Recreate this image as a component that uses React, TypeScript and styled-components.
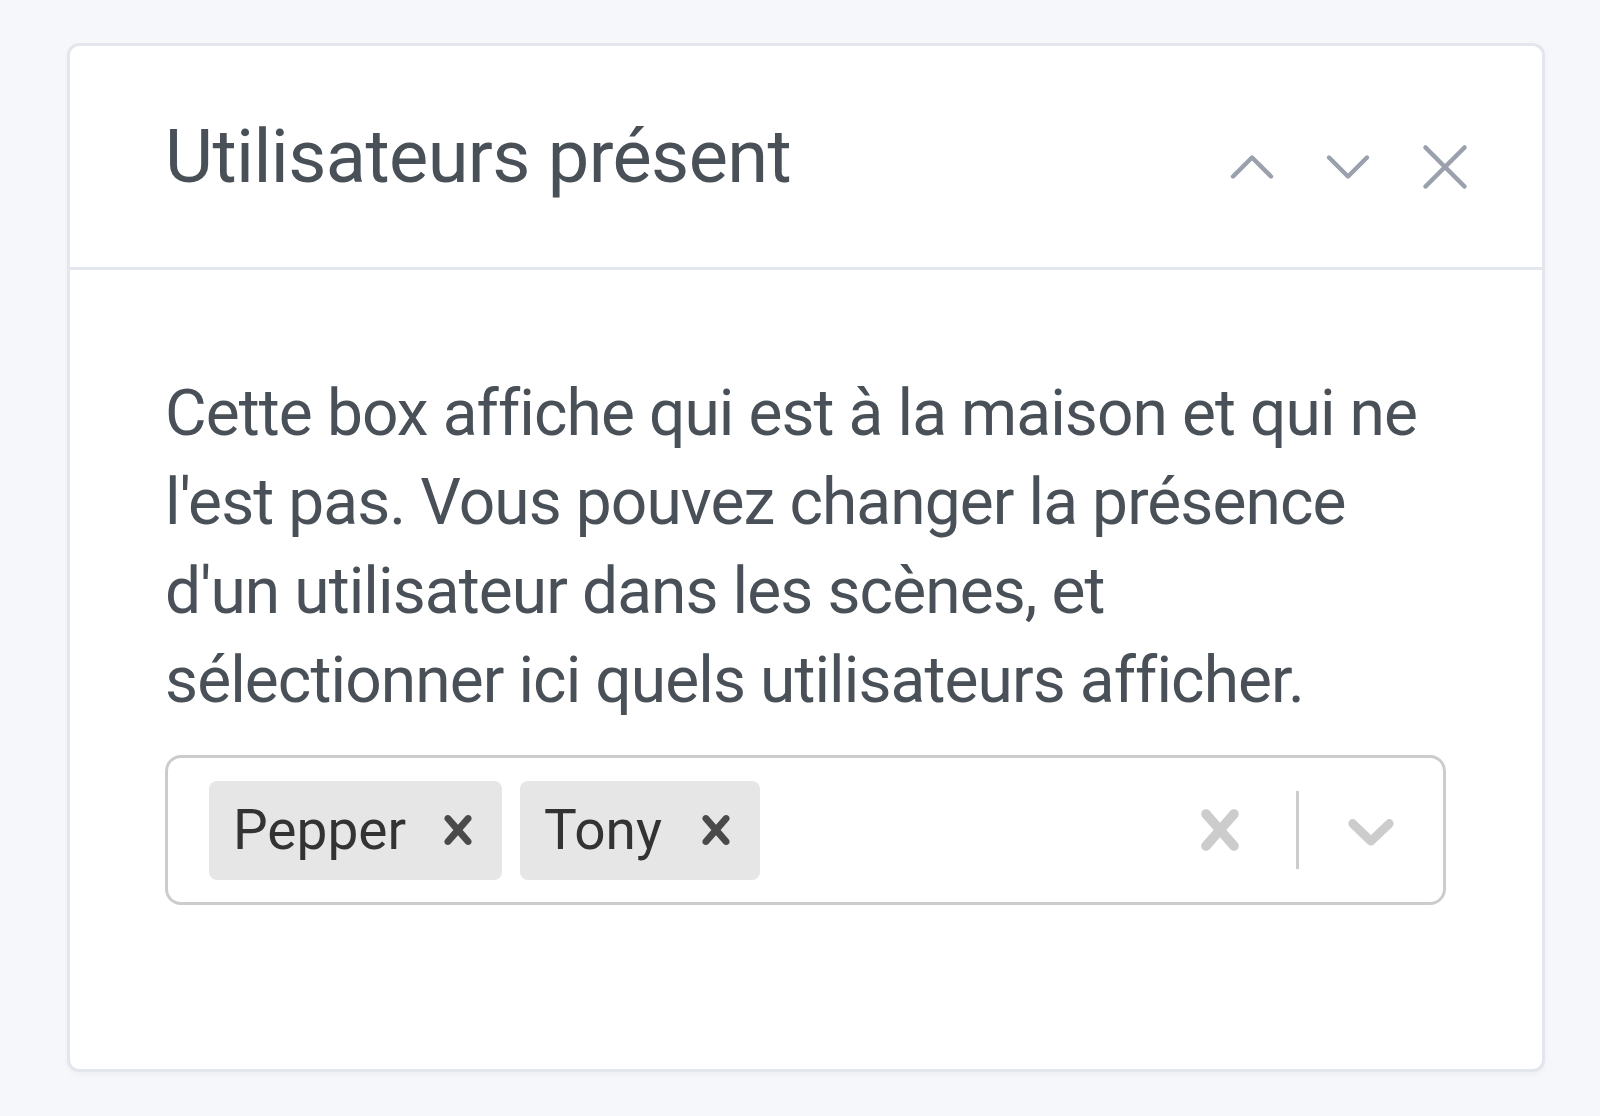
import React from "react"
import styled, { createGlobalStyle } from "styled-components"
import { ChevronUp, ChevronDown, X } from "lucide-react"

const GlobalStyle = createGlobalStyle`
  html, body {
    margin: 0;
    padding: 0;
    background: #f5f7fb;
  }
  body {
    font-family: Roboto, "Noto Sans", "Liberation Sans", sans-serif;
    color: #495057;
  }
`

const Page = styled.div`
  padding: 43px 55px 48px 67px;
`

const Card = styled.div`
  width: 1478px;
  box-sizing: border-box;
  background: #fff;
  border: 3px solid #e3e6ec;
  border-radius: 12px;
  box-shadow: 0 3px 6px rgba(0, 0, 0, 0.03);
  display: flex;
  flex-direction: column;
`

const CardHeader = styled.div`
  height: 224px;
  box-sizing: border-box;
  display: flex;
  align-items: center;
  justify-content: space-between;
  padding: 0 58px 0 95px;
  border-bottom: 3px solid #e3e6ec;
`

const Title = styled.h3`
  margin: 0;
  font-size: 74px;
  font-weight: 400;
  letter-spacing: -0.6px;
  color: #495057;
`

const Actions = styled.div`
  display: flex;
  align-items: center;
  gap: 20px;
  margin-top: 20px;
  color: #9aa0ac;
`

const CardBody = styled.div`
  padding: 99px 96px 164px 95px;
`

const Text = styled.p`
  margin: 0 0 30px;
  font-size: 64px;
  line-height: 89px;
  letter-spacing: -0.9px;
  color: #495057;
  white-space: nowrap;
`

const Control = styled.div`
  height: 150px;
  box-sizing: border-box;
  border: 3px solid #cccccc;
  border-radius: 16px;
  display: flex;
  align-items: center;
  padding-left: 41px;
`

const Values = styled.div`
  flex: 1;
  display: flex;
  gap: 18px;
`

const Chip = styled.div`
  height: 99px;
  display: flex;
  align-items: center;
  background: #e6e6e6;
  border-radius: 8px;
  padding-left: 24px;
`

const ChipLabel = styled.span`
  font-size: 55px;
  color: #333;
`

const ChipRemove = styled.span<{ $gap: number }>`
  display: flex;
  align-items: center;
  margin-left: ${(p) => p.$gap}px;
  width: 88px;
  justify-content: center;
  color: #4a4a4a;
`

const Indicators = styled.div`
  display: flex;
  align-items: center;
  height: 100%;
`

const Indicator = styled.div<{ $left: number; $right: number }>`
  display: flex;
  align-items: center;
  justify-content: center;
  padding: 0 ${(p) => p.$right}px 0 ${(p) => p.$left}px;
  color: #cccccc;
`

const Separator = styled.span`
  width: 3px;
  height: 78px;
  background: #cccccc;
`

const crossPath =
  "M14.348 14.849c-0.469 0.469-1.229 0.469-1.697 0l-2.651-3.030-2.651 3.029c-0.469 0.469-1.229 0.469-1.697 0-0.469-0.469-0.469-1.229 0-1.697l2.758-3.15-2.759-3.152c-0.469-0.469-0.469-1.228 0-1.697s1.228-0.469 1.697 0l2.652 3.031 2.651-3.031c0.469-0.469 1.228-0.469 1.697 0s0.469 1.229 0 1.697l-2.758 3.152 2.758 3.15c0.469 0.469 0.469 1.229 0 1.698z"
const chevronPath =
  "M4.516 7.548c0.436-0.446 1.043-0.481 1.576 0l3.908 3.747 3.908-3.747c0.533-0.481 1.141-0.446 1.574 0 0.436 0.445 0.408 1.197 0 1.615-0.406 0.418-4.695 4.502-4.695 4.502-0.217 0.223-0.502 0.335-0.787 0.335s-0.57-0.112-0.789-0.335c0 0-4.287-4.084-4.695-4.502s-0.436-1.17 0-1.615z"

const SelectIcon = ({ d, size }: { d: string; size: number }) => (
  <svg width={size} height={size} viewBox="0 0 20 20" fill="currentColor">
    <path d={d} />
  </svg>
)

const users = [
  { name: "Pepper", gap: 8 },
  { name: "Tony", gap: 10 },
]

const App = () => {
  return (
    <Page>
      <GlobalStyle />
      <Card>
        <CardHeader>
          <Title>Utilisateurs présent</Title>
          <Actions>
            <ChevronUp size={76} strokeWidth={1.4} />
            <ChevronDown size={76} strokeWidth={1.4} />
            <X size={78} strokeWidth={1.4} />
          </Actions>
        </CardHeader>
        <CardBody>
          <Text>
            Cette box affiche qui est à la maison et qui ne
            <br />
            l'est pas. Vous pouvez changer la présence
            <br />
            d'un utilisateur dans les scènes, et
            <br />
            sélectionner ici quels utilisateurs afficher.
          </Text>
          <Control>
            <Values>
              {users.map((u) => (
                <Chip key={u.name}>
                  <ChipLabel>{u.name}</ChipLabel>
                  <ChipRemove $gap={u.gap}>
                    <SelectIcon d={crossPath} size={58} />
                  </ChipRemove>
                </Chip>
              ))}
            </Values>
            <Indicators>
              <Indicator $left={30} $right={36}>
                <SelectIcon d={crossPath} size={80} />
              </Indicator>
              <Separator />
              <Indicator $left={33} $right={33}>
                <SelectIcon d={chevronPath} size={78} />
              </Indicator>
            </Indicators>
          </Control>
        </CardBody>
      </Card>
    </Page>
  )
}

export default App
